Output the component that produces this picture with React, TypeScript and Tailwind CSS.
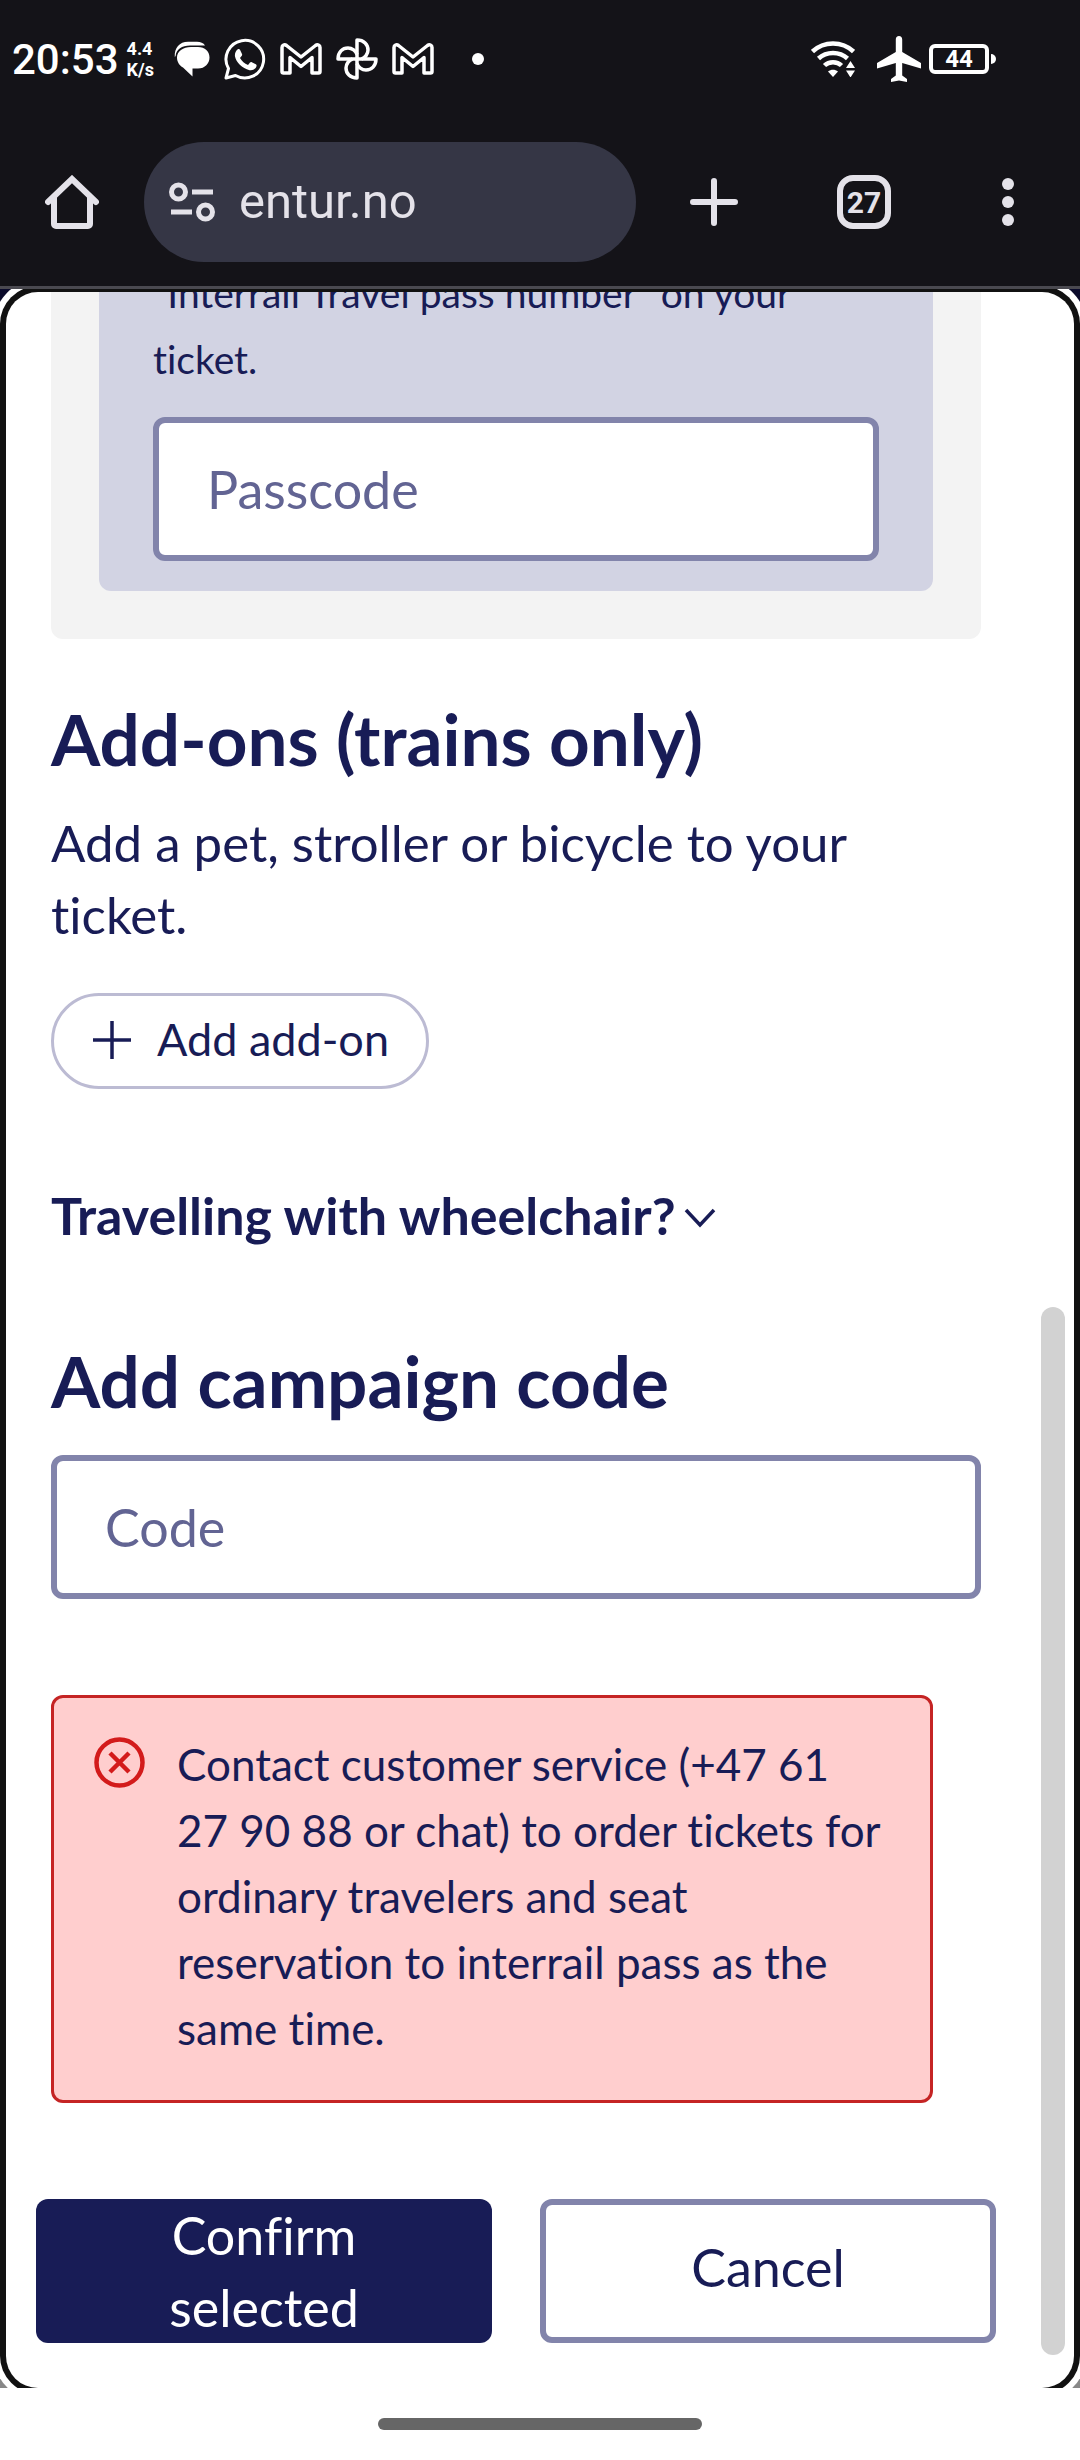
import { useState } from "react";

const inputClasses =
  "block h-36 w-full rounded-xl border-6 border-[#8284ab] bg-white px-12 text-[52px] text-[#181c56] outline-none placeholder:text-[#626493]";

function ChatIcon() {
  return (
    <svg viewBox="0 0 36 36" className="size-9" fill="currentColor" aria-hidden="true">
      <path d="M17 6h7c7 0 11.500 4.500 11.500 10.500S31 27.500 24 27.500h-5.500v8L9 26.500C5.500 24.500 3 21 3 16.500 3 10.500 9 6 17 6Z" />
      <path d="M.8 16C.2 7 5.500 .8 14 .8h9c3.500 0 6.500 1.200 8 3.800H16C8 4.600 2.200 8.500 1.600 15Z" />
    </svg>
  );
}

function WhatsAppIcon() {
  return (
    <svg viewBox="0 0 42 42" className="size-[42px]" fill="none" aria-hidden="true">
      <path
        d="M2 40l2.500-9.500A18.800 18.800 0 1 1 11.500 37.500Z"
        stroke="currentColor"
        strokeWidth="3"
        strokeLinejoin="round"
      />
      <path
        d="M13.500 11.500c.8-.8 2-.6 2.500.3l2 4.200c.3.700.1 1.400-.4 2l-1.600 2c2 3.500 4.500 5.600 8 7l2-2.400c.5-.6 1.100-.7 1.800-.4l4 2c.8.400 1 1.200.6 2.300-1 2.700-4 4.300-6.800 3.700C18 30.500 12 24 11 18.500c-.5-3 .8-5.500 2.500-7Z"
        fill="currentColor"
      />
    </svg>
  );
}

function GmailIcon() {
  return (
    <svg viewBox="0 0 42 32" className="h-8 w-[42px]" fill="none" aria-hidden="true">
      <path
        d="M2 4.500C2 2 4.500 1 6.500 2.500L21 14 35.500 2.500C37.500 1 40 2 40 4.500V28.500a1.500 1.500 0 0 1-1.500 1.500H32V14.500L21 23.500 10 14.500V30H3.500A1.500 1.500 0 0 1 2 28.500Z"
        stroke="currentColor"
        strokeWidth="3.500"
        strokeLinejoin="round"
      />
    </svg>
  );
}

function PinwheelIcon() {
  const blade = "M21 21V2C28 2 32 6.500 32 12c0 4-3 8-6.500 9";
  return (
    <svg
      viewBox="0 0 42 42"
      className="size-[42px]"
      fill="none"
      stroke="currentColor"
      strokeWidth="3.500"
      strokeLinejoin="round"
      aria-hidden="true"
    >
      {[0, 90, 180, 270].map((angle) => (
        <path key={angle} d={blade} transform={`rotate(${angle} 21 21)`} />
      ))}
    </svg>
  );
}

function WifiIcon() {
  return (
    <svg viewBox="0 0 44 36" className="h-9 w-11" aria-hidden="true">
      <g fill="none" stroke="currentColor" strokeWidth="4.500">
        <path d="M1.500 10.500C13-.2 31-.2 42.500 10.500" />
        <path d="M7.500 17.500C15.500 10 28.500 10 36.500 17.500" />
        <path d="M13.500 24.500c4.500-4.500 12.500-4.500 17 0" />
      </g>
      <path d="M17 30.500c3-2.500 7-2.500 10 0L22 36Z" fill="currentColor" />
      <path d="M35 27l4.500-7 4.500 7ZM35 29.500h9L39.500 36.500Z" fill="currentColor" />
    </svg>
  );
}

function AirplaneIcon() {
  return (
    <svg viewBox="0 0 44 46" className="h-[46px] w-11" fill="currentColor" aria-hidden="true">
      <path d="M22 0c2 0 3.200 1.500 3.200 3.500V16L44 27v5.500L25.200 27v12.500L30 43v3l-8-1.500L14 46v-3l4.800-3.500V27L0 32.500V27l18.800-11V3.500C18.800 1.500 20 0 22 0Z" />
    </svg>
  );
}

function StatusBar() {
  return (
    <div className="flex h-[118px] items-center pr-[84px] pl-3 text-white">
      <span className="text-[42px] font-medium">20:53</span>
      <span className="ml-2 flex flex-col text-lg leading-[21px] font-bold">
        <span>4.4</span>
        <span>K/s</span>
      </span>
      <div className="ml-5 flex items-center gap-[14px]">
        <ChatIcon />
        <WhatsAppIcon />
        <GmailIcon />
        <PinwheelIcon />
        <GmailIcon />
      </div>
      <span className="ml-[38px] size-3 rounded-full bg-white" />
      <div className="ml-auto flex items-center">
        <WifiIcon />
        <span className="ml-[22px]">
          <AirplaneIcon />
        </span>
        <span className="ml-2 flex h-[30px] w-[60px] items-center justify-center rounded-md border-4 border-white text-2xl leading-none font-bold">
          44
        </span>
        <span className="ml-0.5 h-[10px] w-[5px] rounded-r-full bg-white" />
      </div>
    </div>
  );
}

function BrowserBar() {
  return (
    <div className="flex h-[168px] items-center pr-[66px] pl-[45px] text-[#e4e2e9]">
      <button type="button" aria-label="Home">
        <svg viewBox="0 0 54 54" className="size-[54px]" fill="none" stroke="currentColor" strokeWidth="6" aria-hidden="true">
          <path d="M3 27 27 4 51 27" strokeLinecap="round" />
          <path d="M9 22V49a2 2 0 0 0 2 2H43a2 2 0 0 0 2-2V22" />
        </svg>
      </button>
      <div className="ml-[45px] flex h-[120px] min-w-0 flex-1 items-center rounded-full bg-[#353645] pl-[25px]">
        <svg viewBox="0 0 46 40" className="h-10 w-[46px] shrink-0" fill="none" stroke="currentColor" strokeWidth="5" aria-hidden="true">
          <circle cx="9.500" cy="10" r="7" />
          <path d="M23 10H44M2 30H23" />
          <circle cx="36.500" cy="30" r="7" />
        </svg>
        <input
          type="text"
          aria-label="Address"
          defaultValue="entur.no"
          className="ml-6 w-full min-w-0 bg-transparent text-[49px] outline-none"
        />
      </div>
      <button type="button" aria-label="New tab" className="ml-[54px]">
        <svg viewBox="0 0 48 48" className="size-12" stroke="currentColor" strokeWidth="6" strokeLinecap="round" aria-hidden="true">
          <path d="M24 3V45M3 24H45" />
        </svg>
      </button>
      <button
        type="button"
        aria-label="27 open tabs"
        className="ml-[99px] flex size-[54px] items-center justify-center rounded-2xl border-6 border-[#e4e2e9] text-[30px] font-bold"
      >
        27
      </button>
      <button type="button" aria-label="Menu" className="ml-[111px] flex flex-col gap-1.5">
        <span className="size-3 rounded-full bg-[#e4e2e9]" />
        <span className="size-3 rounded-full bg-[#e4e2e9]" />
        <span className="size-3 rounded-full bg-[#e4e2e9]" />
      </button>
    </div>
  );
}

function ErrorAlert() {
  return (
    <div
      role="alert"
      className="mt-24 mr-12 flex gap-8 rounded-xl border-3 border-[#c52424] bg-[#ffcece] pt-[33px] pr-6 pb-[39px] pl-10"
    >
      <svg
        viewBox="0 0 51 51"
        className="mt-1.5 size-[51px] shrink-0"
        fill="none"
        stroke="#d31b1b"
        strokeWidth="4.500"
        aria-hidden="true"
      >
        <circle cx="25.500" cy="25.500" r="23" />
        <path d="M16 16 35 35M35 16 16 35" />
      </svg>
      <p className="text-[44px] leading-[66px]">
        Contact customer service (+47 61
        <br />
        27 90 88 or chat) to order tickets for
        <br />
        ordinary travelers and seat
        <br />
        reservation to interrail pass as the
        <br />
        same time.
      </p>
    </div>
  );
}

export default function App() {
  const [passcode, setPasscode] = useState("");
  const [code, setCode] = useState("");

  return (
    <div className="flex min-h-screen flex-col bg-white">
      <header className="border-b-3 border-[#4a4950] bg-[#141318] font-[Roboto,sans-serif]">
        <StatusBar />
        <BrowserBar />
      </header>

      <div className="overflow-hidden bg-linear-to-b from-[#0b0b2b] from-50% to-[#888888] to-50% px-1.5 pt-[3px]">
        <main className="relative overflow-hidden rounded-[32px] bg-white font-[Lato,sans-serif] text-[#181c56] shadow-[0_0_0_6px_#111111,0_0_0_12px_#ffffff] [font-variant-ligatures:no-common-ligatures]">
          <form className="pb-[45px]" onSubmit={(e) => e.preventDefault()}>
            <div className="pr-[93px] pl-[45px]">
              {/* Interrail pass */}
              <section className="rounded-b-xl bg-[#f3f3f3] px-12 pb-12">
                <div className="rounded-b-xl bg-[#d2d3e3] px-[54px] pb-[30px]">
                  {/* scrolled partly under the top edge of the panel */}
                  <label htmlFor="passcode" className="-mt-8 block text-[39px] leading-[66px]">
                    “Interrail Travel pass number” on your
                    <br />
                    ticket.
                  </label>
                  <input
                    id="passcode"
                    type="text"
                    placeholder="Passcode"
                    value={passcode}
                    onChange={(e) => setPasscode(e.target.value)}
                    className={`mt-[25px] ${inputClasses}`}
                  />
                </div>
              </section>

              {/* Add-ons */}
              <h2 className="mt-[60px] text-[71px] leading-20 font-bold">Add-ons (trains only)</h2>
              <p className="mt-7 text-[51px] leading-[72px]">
                Add a pet, stroller or bicycle to your
                <br />
                ticket.
              </p>
              <button
                type="button"
                className="mt-[42px] flex h-24 items-center gap-6 rounded-full border-3 border-[#bcbbd3] px-[37px] pb-0.5 text-[45px]"
              >
                <svg viewBox="0 0 42 42" className="size-[42px]" stroke="currentColor" strokeWidth="3.500" aria-hidden="true">
                  <path d="M21 2V40M2 21H40" />
                </svg>
                Add add-on
              </button>
              <button
                type="button"
                aria-expanded={false}
                className="mt-[90px] flex items-center gap-2 text-[52px] leading-[72px] font-bold"
              >
                Travelling with wheelchair?
                <svg viewBox="0 0 32 20" className="mt-1.5 h-5 w-8" fill="none" stroke="currentColor" strokeWidth="3.500" aria-hidden="true">
                  <path d="M2 2 16 17 30 2" />
                </svg>
              </button>

              {/* Campaign code */}
              <h2 className="mt-[90px] text-[71px] leading-20 font-bold">
                <label htmlFor="campaign-code">Add campaign code</label>
              </h2>
              <input
                id="campaign-code"
                type="text"
                placeholder="Code"
                value={code}
                onChange={(e) => setCode(e.target.value)}
                className={`mt-[34px] ${inputClasses}`}
              />
              <ErrorAlert />
            </div>

            <div className="mt-24 grid grid-cols-2 gap-12 pr-[78px] pl-[30px]">
              <button
                type="submit"
                className="h-36 rounded-xl bg-[#181c56] px-24 text-[52px] leading-[72px] text-white"
              >
                Confirm selected
              </button>
              <button
                type="button"
                className="h-36 rounded-xl border-6 border-[#8284ab] bg-white pb-2 text-[52px] leading-[72px]"
              >
                Cancel
              </button>
            </div>
          </form>

          {/* Scroll thumb */}
          <div className="absolute right-[9px] bottom-[33px] h-1/2 w-6 rounded-full bg-[#d2d2d2]" />
        </main>
      </div>

      <footer className="flex h-[72px] items-center justify-center bg-white">
        <div className="h-3 w-[30%] rounded-full bg-[#666666]" />
      </footer>
    </div>
  );
}
